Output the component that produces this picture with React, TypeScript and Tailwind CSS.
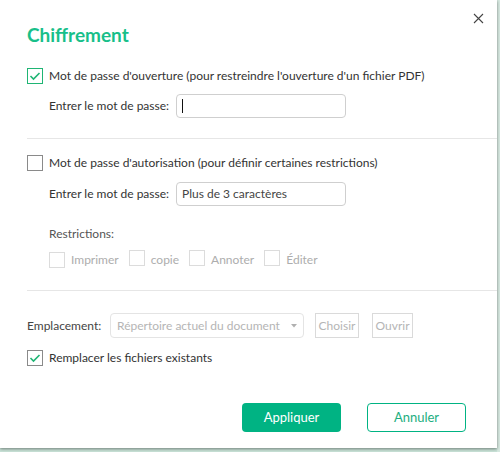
import React from "react";

const font = { fontFamily: "Lato, 'Noto Sans', sans-serif" };

function Check({ checked, green, muted }: { checked?: boolean; green?: boolean; muted?: boolean }) {
  return (
    <span
      className={
        "inline-flex items-center justify-center w-[16px] h-[16px] shrink-0 border bg-white " +
        (green ? "border-[#1fb574]" : muted ? "border-[#dcdcdc]" : "border-[#8a8a8a]")
      }
    >
      {checked && (
        <svg width="12" height="10" viewBox="0 0 12 10">
          <path d="M1.5 5 L4.5 8 L10.5 2" fill="none" stroke="#1fb574" strokeWidth="1.6" />
        </svg>
      )}
    </span>
  );
}

export default function App() {
  return (
    <div className="relative w-[500px] h-[452px] overflow-hidden bg-[#c9e3d8] whitespace-nowrap" style={font}>
      <div className="absolute left-[497px] top-0 w-[3px] h-full bg-[#d7e9e1]" />
      <div className="w-[497px] h-[448px] bg-white shadow-[0_1px_3px_rgba(0,0,0,0.45)] relative text-[12px] text-[#333]">
        <button className="absolute left-[473px] top-[13px] w-[11px] h-[11px]">
          <svg width="11" height="11" viewBox="0 0 11 11">
            <path d="M1 1 L10 10 M10 1 L1 10" stroke="#444" strokeWidth="1.1" />
          </svg>
        </button>
        <div className="pt-[23px] pl-[27px]">
          <h1 className="text-[19px] font-bold text-[#18bf8a] leading-[24px]">Chiffrement</h1>

          <div className="mt-[21px] flex items-center gap-[6px] h-[16px]">
            <Check checked green />
            <span>Mot de passe d'ouverture (pour restreindre l'ouverture d'un fichier PDF)</span>
          </div>
          <div className="mt-[10px] pl-[22px] flex items-center">
            <span className="w-[127px]">Entrer le mot de passe:</span>
            <div className="w-[170px] h-[24px] border border-[#cfcfcf] rounded-[4px] flex items-center px-[5px]">
              <span className="w-px h-[14px] bg-[#111]" />
            </div>
          </div>
        </div>

        <div className="ml-[27px] mt-[20px] h-px bg-[#e6e6e6]" />

        <div className="pl-[27px]">
          <div className="mt-[16px] flex items-center gap-[6px] h-[16px]">
            <Check />
            <span>Mot de passe d'autorisation (pour définir certaines restrictions)</span>
          </div>
          <div className="mt-[11px] pl-[22px] flex items-center">
            <span className="w-[127px]">Entrer le mot de passe:</span>
            <div className="w-[170px] h-[24px] border border-[#cfcfcf] rounded-[4px] flex items-center px-[5px] text-[#444]">
              Plus de 3 caractères
            </div>
          </div>
          <div className="mt-[20px] pl-[22px] text-[#555] leading-[16px]">Restrictions:</div>
          <div className="mt-[10px] pl-[22px] flex items-center h-[16px] text-[#adadad]">
            <Check muted />
            <span className="ml-[6px]">Imprimer</span>
            <span className="ml-[10px]"><Check muted /></span>
            <span className="ml-[6px]">copie</span>
            <span className="ml-[10px]"><Check muted /></span>
            <span className="ml-[6px]">Annoter</span>
            <span className="ml-[10px]"><Check muted /></span>
            <span className="ml-[6px]">Éditer</span>
          </div>
        </div>

        <div className="ml-[27px] mt-[22px] h-px bg-[#e6e6e6]" />

        <div className="pl-[27px]">
          <div className="mt-[22px] flex items-center h-[25px]">
            <span className="text-[#444] w-[83px]">Emplacement:</span>
            <div className="w-[194px] h-[25px] border border-[#e4e4e4] rounded-[4px] flex items-center justify-between pl-[6px] pr-[6px] text-[#b5b5b5]">
              <span>Répertoire actuel du document</span>
              <svg width="6" height="4" viewBox="0 0 6 4"><path d="M0 0 L6 0 L3 3.5 Z" fill="#b0b0b0" /></svg>
            </div>
            <div className="ml-[11px] h-[25px] w-[44px] justify-center border border-[#dadada] flex items-center text-[#b5b5b5]">Choisir</div>
            <div className="ml-[13px] h-[25px] w-[41px] justify-center border border-[#dadada] flex items-center text-[#b5b5b5]">Ouvrir</div>
          </div>
          <div className="mt-[12px] flex items-center gap-[6px] h-[16px]">
            <Check checked />
            <span>Remplacer les fichiers existants</span>
          </div>
        </div>

        <div className="absolute left-[242px] top-[403px] flex gap-[26px]">
          <button className="w-[99px] h-[29px] rounded-[4px] bg-[#00b383] text-white text-[13px]">Appliquer</button>
          <button className="w-[99px] h-[29px] rounded-[4px] border border-[#00b383] text-[#1dae80] text-[13px]">Annuler</button>
        </div>
      </div>
    </div>
  );
}
